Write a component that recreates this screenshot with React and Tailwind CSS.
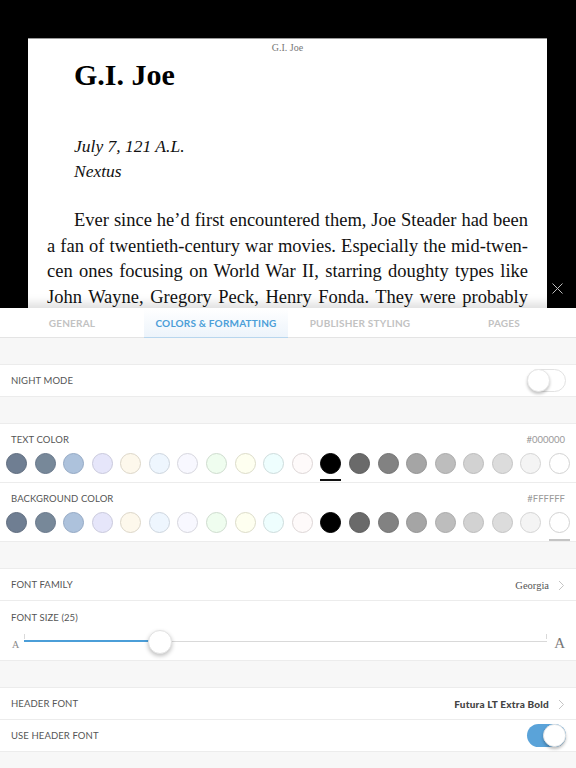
import React from "react";

const swatches = [
  { c: "#6f7e92", b: "#5f6c7e" },
  { c: "#778899", b: "#68778a" },
  { c: "#adc2dc", b: "#94a9c4" },
  { c: "#e6e6fa", b: "#c9c9dc" },
  { c: "#fdf8ec", b: "#dcd6c8" },
  { c: "#eef6fe", b: "#cdd5de" },
  { c: "#f8f8ff", b: "#d6d6de" },
  { c: "#effdef", b: "#cedcce" },
  { c: "#fefff0", b: "#dcdcc9" },
  { c: "#eefefe", b: "#cddcdc" },
  { c: "#fefafa", b: "#ddd6d6" },
  { c: "#000000", b: "#000000" },
  { c: "#6a6a6a", b: "#5c5c5c" },
  { c: "#828282", b: "#727272" },
  { c: "#a5a5a5", b: "#939393" },
  { c: "#bdbdbd", b: "#aaaaaa" },
  { c: "#d2d2d2", b: "#bcbcbc" },
  { c: "#dcdcdc", b: "#c4c4c4" },
  { c: "#f4f4f4", b: "#d4d4d4" },
  { c: "#ffffff", b: "#d2d2d2" },
];

const label = "relative top-[1px] font-['Lato',sans-serif] text-[9.5px] text-[#555] tracking-[0.1px]";

function Chevron() {
  return (
    <svg width="7" height="11" viewBox="0 0 7 11" className="ml-[9px] relative top-[1px]">
      <polyline points="1,1 5.5,5.5 1,10" fill="none" stroke="#c4c4c4" strokeWidth="1" />
    </svg>
  );
}

function SwatchRow({ selected, lineColor, lineGap }) {
  return (
    <div className="flex justify-between px-[6px] mt-[8px]">
      {swatches.map((s, i) => (
        <div key={i} className="flex flex-col items-center">
          <div
            className="w-[21px] h-[21px] rounded-full border"
            style={{ backgroundColor: s.c, borderColor: s.b }}
          />
          <div
            className={`w-[21px] h-[2px] ${lineGap}`}
            style={{ backgroundColor: i === selected ? lineColor : "transparent" }}
          />
        </div>
      ))}
    </div>
  );
}

function Band({ h }) {
  return <div className={`bg-[#f7f7f7] ${h}`} />;
}

export default function App() {
  const lines = [
    "a fan of twentieth-century war movies. Especially the mid-twen-",
    "cen ones focusing on World War II, starring doughty types like",
    "John Wayne, Gregory Peck, Henry Fonda. They were probably",
  ];
  return (
    <div className="w-[576px] h-[768px] bg-black overflow-hidden flex flex-col">
      {/* Reader area */}
      <div className="h-[308px] flex shrink-0">
        <div className="w-[28px]" />
        <div className="w-[519px] mt-[38px] bg-white overflow-hidden border-t border-[#9a9a9a] font-['Liberation_Serif',serif] text-[#111]">
          <div className="h-[17px] leading-[17px] text-center text-[10px] text-[#777]">G.I. Joe</div>
          <div className="h-[38px] leading-[38px] pl-[46px] text-[30px] font-bold text-black">G.I. Joe</div>
          <div className="mt-[40px] pl-[46px] text-[17.5px] italic leading-[25px]">July 7, 121 A.L.</div>
          <div className="pl-[46px] text-[17.5px] italic leading-[25px]">Nextus</div>
          <div className="mt-[24px] px-[19px] text-[18.5px] leading-[25.6px]">
            <div className="pl-[27px] text-justify [text-align-last:justify]">
              Ever since he’d first encountered them, Joe Steader had been
            </div>
            {lines.map((l, i) => (
              <div key={i} className="text-justify [text-align-last:justify] whitespace-nowrap">
                {l}
              </div>
            ))}
          </div>
        </div>
        <div className="w-[29px] flex flex-col justify-end items-center pb-[14px] pr-[9px]">
          <svg width="11" height="11" viewBox="0 0 11 11">
            <line x1="0.5" y1="0.5" x2="10.5" y2="10.5" stroke="#bdbdbd" strokeWidth="1" />
            <line x1="10.5" y1="0.5" x2="0.5" y2="10.5" stroke="#bdbdbd" strokeWidth="1" />
          </svg>
        </div>
      </div>

      {/* Settings panel */}
      <div className="relative z-10 flex-1 bg-[#f7f7f7] shadow-[0_-5px_9px_rgba(0,0,0,0.13)] flex flex-col">
        {/* Tabs */}
        <div className="flex h-[30px] bg-white border-b border-[#e4e4e4] font-['Lato',sans-serif] font-bold text-[10px] tracking-[0.2px]">
          <div className="flex-1 flex items-center justify-center pt-[2px] text-[#c2c2c2]">GENERAL</div>
          <div className="flex-1 flex items-center justify-center pt-[2px] text-[#4b9ed8] bg-gradient-to-b from-white to-[#edf4fb] border-b border-[#b8d6ee] -mb-px">
            COLORS &amp; FORMATTING
          </div>
          <div className="flex-1 flex items-center justify-center pt-[2px] text-[#c2c2c2]">PUBLISHER STYLING</div>
          <div className="flex-1 flex items-center justify-center pt-[2px] text-[#c2c2c2]">PAGES</div>
        </div>

        <Band h="h-[26px]" />

        {/* Night mode */}
        <div className="h-[33px] bg-white border-y border-[#ececec] flex items-center justify-between pl-[11px] pr-[10px]">
          <span className={label}>NIGHT MODE</span>
          <div className="w-[39px] h-[23px] rounded-full border border-[#e2e2e2] bg-white relative">
            <div className="absolute -left-px -top-px w-[23px] h-[23px] rounded-full bg-white border border-[#e6e6e6] shadow-[0_2px_3px_rgba(0,0,0,0.22)]" />
          </div>
        </div>

        <Band h="h-[26px]" />

        {/* Text color */}
        <div className="h-[60px] bg-white border-y border-[#ececec] pt-[9px]">
          <div className="flex justify-between items-center h-[12px] pl-[11px] pr-[11px]">
            <span className={label}>TEXT COLOR</span>
            <span className="relative top-[1px] font-['Lato',sans-serif] text-[9.5px] text-[#9a9a9a]">#000000</span>
          </div>
          <SwatchRow selected={11} lineColor="#111" lineGap="mt-[5px]" />
        </div>

        {/* Background color */}
        <div className="h-[59px] bg-white border-b border-[#ececec] pt-[9px]">
          <div className="flex justify-between items-center h-[12px] pl-[11px] pr-[11px]">
            <span className={label}>BACKGROUND COLOR</span>
            <span className="relative top-[1px] font-['Lato',sans-serif] text-[9.5px] text-[#9a9a9a]">#FFFFFF</span>
          </div>
          <SwatchRow selected={19} lineColor="#c4c4c4" lineGap="mt-[6px]" />
        </div>

        <Band h="h-[26px]" />

        {/* Font family */}
        <div className="h-[33px] bg-white border-y border-[#ececec] flex items-center justify-between pl-[11px] pr-[11px]">
          <span className={label}>FONT FAMILY</span>
          <div className="flex items-center">
            <span className="relative top-[1px] font-['Liberation_Serif',serif] text-[10.5px] text-[#555]">Georgia</span>
            <Chevron />
          </div>
        </div>

        {/* Font size */}
        <div className="h-[60px] bg-white border-b border-[#ececec] pt-[10px]">
          <div className="h-[12px] flex items-center pl-[11px]">
            <span className={label}>FONT SIZE (25)</span>
          </div>
          <div className="flex items-center h-[26px] mt-[6px] pl-[12px] pr-[11px]">
            <span className="font-['Liberation_Serif',serif] text-[10px] text-[#888] w-[12px] mt-[5px]">A</span>
            <div className="relative flex-1 h-[26px]">
              <div className="absolute left-0 right-0 top-[12px] h-px bg-[#d9d9d9]" />
              <div className="absolute left-0 top-[11px] h-[2px] w-[136px] bg-[#4b9ed8]" />
              <div className="absolute left-0 top-[5px] w-px h-[5px] bg-[#d9d9d9]" />
              <div className="absolute right-0 top-[5px] w-px h-[5px] bg-[#d9d9d9]" />
              <div className="absolute left-[124px] top-[1px] w-[24px] h-[24px] rounded-full bg-white border border-[#e2e2e2] shadow-[0_2px_4px_rgba(0,0,0,0.25)]" />
            </div>
            <span className="font-['Liberation_Serif',serif] text-[15px] text-[#777] w-[18px] text-right mt-[2px]">A</span>
          </div>
        </div>

        <Band h="h-[26px]" />

        {/* Header font */}
        <div className="h-[33px] bg-white border-y border-[#ececec] flex items-center justify-between pl-[11px] pr-[11px]">
          <span className={label}>HEADER FONT</span>
          <div className="flex items-center">
            <span className="relative top-[1px] font-['Lato',sans-serif] font-black text-[10px] text-[#444] tracking-[0.2px]">Futura LT Extra Bold</span>
            <Chevron />
          </div>
        </div>

        {/* Use header font */}
        <div className="h-[32px] bg-white border-b border-[#ececec] flex items-center justify-between pl-[11px] pr-[10px]">
          <span className={label}>USE HEADER FONT</span>
          <div className="w-[39px] h-[23px] rounded-full bg-[#5aa3d9] relative">
            <div className="absolute right-0 top-0 w-[23px] h-[23px] rounded-full bg-white border border-[#e6e6e6] shadow-[0_2px_3px_rgba(0,0,0,0.25)]" />
          </div>
        </div>

        <div className="flex-1 bg-[#f7f7f7]" />
      </div>
    </div>
  );
}
